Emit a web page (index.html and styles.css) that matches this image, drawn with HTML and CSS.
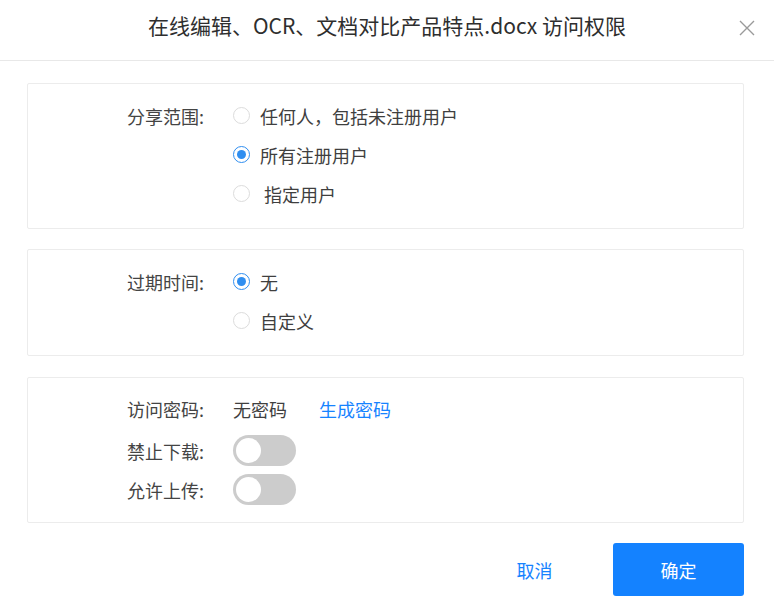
FILE: index.html
```html
<!DOCTYPE html>
<html lang="zh-CN">
<head>
<meta charset="utf-8">
<link rel="stylesheet" href="styles.css">
</head>
<body>
<div class="dialog">
  <div class="header">
    <div class="title">在线编辑、OCR、文档对比产品特点.docx 访问权限</div>
    <svg class="close" width="16" height="16" viewBox="0 0 16 16"><path d="M1 1L15 15M15 1L1 15" stroke="#9a9a9a" stroke-width="1.4" fill="none"/></svg>
  </div>
  <div class="body">
    <div class="card card-first">
      <div class="row">
        <div class="label">分享范围:</div>
        <div class="value"><span class="radio"></span><span>任何人，包括未注册用户</span></div>
      </div>
      <div class="row">
        <div class="label"></div>
        <div class="value"><span class="radio checked"></span><span>所有注册用户</span></div>
      </div>
      <div class="row">
        <div class="label"></div>
        <div class="value"><span class="radio"></span><span class="indent">指定用户</span></div>
      </div>
    </div>
    <div class="card">
      <div class="row">
        <div class="label">过期时间:</div>
        <div class="value"><span class="radio checked"></span><span>无</span></div>
      </div>
      <div class="row">
        <div class="label"></div>
        <div class="value"><span class="radio"></span><span>自定义</span></div>
      </div>
    </div>
    <div class="card card-last">
      <div class="row row-first">
        <div class="label">访问密码:</div>
        <div class="value"><span class="plain">无密码</span><span class="link">生成密码</span></div>
      </div>
      <div class="row">
        <div class="label">禁止下载:</div>
        <div class="value"><span class="switch"><span class="knob"></span></span></div>
      </div>
      <div class="row">
        <div class="label">允许上传:</div>
        <div class="value"><span class="switch"><span class="knob"></span></span></div>
      </div>
    </div>
    <div class="footer">
      <button class="btn btn-cancel">取消</button>
      <button class="btn btn-ok">确定</button>
    </div>
  </div>
</div>
</body>
</html>
```
FILE: styles.css
```css
html, body {
  margin: 0;
  padding: 0;
  background: #fff;
}
body {
  font-family: "Noto Sans CJK SC", "Noto Sans", "Liberation Sans", sans-serif;
  color: #3f3f3f;
  font-size: 18px;
}
.dialog {
  width: 774px;
  height: 615px;
  box-sizing: border-box;
}
.header {
  height: 61px;
  border-bottom: 1px solid #e8e8e8;
  display: flex;
  align-items: center;
  justify-content: center;
  position: relative;
  box-sizing: border-box;
  padding-bottom: 9px;
}
.title {
  font-size: 21px;
  color: #2e2e2e;
  line-height: 1;
}
.close {
  position: absolute;
  right: 19px;
  top: 20px;
}
.body {
  padding: 22px 30px 0 27px;
}
.card {
  border: 1px solid #ececec;
  border-radius: 2px;
  padding: 12px 0 15px;
  margin-bottom: 21px;
}
.card-first {
  margin-bottom: 20px;
}
.card-last {
  margin-bottom: 20px;
  padding-bottom: 13px;
}
.row {
  display: flex;
  align-items: center;
  height: 39px;
}
.row-first {
  padding-bottom: 3px;
  height: 38px;
}
.label {
  width: 176px;
  text-align: right;
  flex-shrink: 0;
  color: #444;
}
.value {
  margin-left: 29px;
  display: flex;
  align-items: center;
}
.radio {
  width: 15px;
  height: 15px;
  border: 1px solid #dcdcdc;
  border-radius: 50%;
  margin-right: 10px;
  position: relative;
  flex-shrink: 0;
}
.radio.checked {
  border-color: #2f8ef0;
}
.radio.checked::after {
  content: "";
  position: absolute;
  left: 3px;
  top: 3px;
  width: 9px;
  height: 9px;
  border-radius: 50%;
  background: #2f8ef0;
}
.indent {
  margin-left: 4px;
}
.plain {
  margin-right: 32px;
}
.link {
  color: #1683ff;
}
.switch {
  width: 63px;
  height: 31px;
  border-radius: 16px;
  background: #cccccc;
  position: relative;
  display: inline-block;
}
.knob {
  position: absolute;
  left: 3px;
  top: 3px;
  width: 25px;
  height: 25px;
  border-radius: 50%;
  background: #fff;
}
.footer {
  display: flex;
  justify-content: flex-end;
  gap: 13px;
}
.btn {
  width: 131px;
  height: 53px;
  border: none;
  border-radius: 3px;
  font-family: inherit;
  font-size: 18px;
  padding: 0;
  cursor: pointer;
}
.btn-cancel {
  background: transparent;
  color: #1683ff;
}
.btn-ok {
  background: #1482ff;
  color: #fff;
}
```
